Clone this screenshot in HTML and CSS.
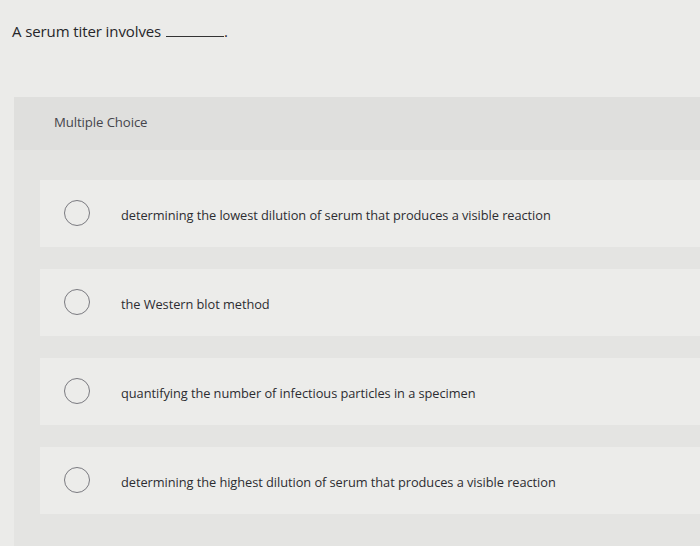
FILE: index.html
```html
<!DOCTYPE html>
<html>
<head>
<meta charset="utf-8">
<link rel="stylesheet" href="styles.css">
</head>
<body>
<div class="question">A serum titer involves <span class="blank"></span>.</div>
<div class="panel">
  <div class="panel-head">Multiple Choice</div>
  <div class="options">
    <div class="option"><span class="radio"></span><span class="label">determining the lowest dilution of serum that produces a visible reaction</span></div>
    <div class="option"><span class="radio"></span><span class="label">the Western blot method</span></div>
    <div class="option"><span class="radio"></span><span class="label">quantifying the number of infectious particles in a specimen</span></div>
    <div class="option"><span class="radio"></span><span class="label">determining the highest dilution of serum that produces a visible reaction</span></div>
  </div>
</div>
</body>
</html>
```
FILE: styles.css
```css
html, body {
  margin: 0;
  padding: 0;
}
body {
  width: 700px;
  height: 546px;
  overflow: hidden;
  background: #ebebe9;
  font-family: "Open Sans", "Liberation Sans", sans-serif;
  color: #2f2f33;
}
.question {
  height: 97px;
  box-sizing: border-box;
  padding: 21px 0 0 12px;
  font-size: 15px;
  letter-spacing: -0.1px;
  color: #26262a;
}
.blank {
  display: inline-block;
  width: 58px;
  border-bottom: 1px solid #333;
  margin-left: 1px;
}
.panel {
  margin-left: 14px;
  background: #e4e4e2;
  height: 449px;
}
.panel-head {
  height: 53px;
  box-sizing: border-box;
  padding: 16px 0 0 40px;
  font-size: 13.2px;
  letter-spacing: -0.1px;
  color: #45454b;
  background: #dfdfdd;
}
.options {
  display: flex;
  flex-direction: column;
  gap: 22px;
  padding: 30px 0 0 26px;
}
.option {
  height: 67px;
  display: flex;
  align-items: center;
  background: #ececea;
}
.radio {
  width: 26px;
  height: 26px;
  border: 1.5px solid #7a7a80;
  border-radius: 50%;
  box-sizing: border-box;
  margin-left: 24px;
  margin-right: 31px;
  margin-top: -2px;
  flex-shrink: 0;
}
.label {
  font-size: 12.8px;
  letter-spacing: -0.05px;
  color: #2c2c31;
  margin-top: 2px;
}
```
